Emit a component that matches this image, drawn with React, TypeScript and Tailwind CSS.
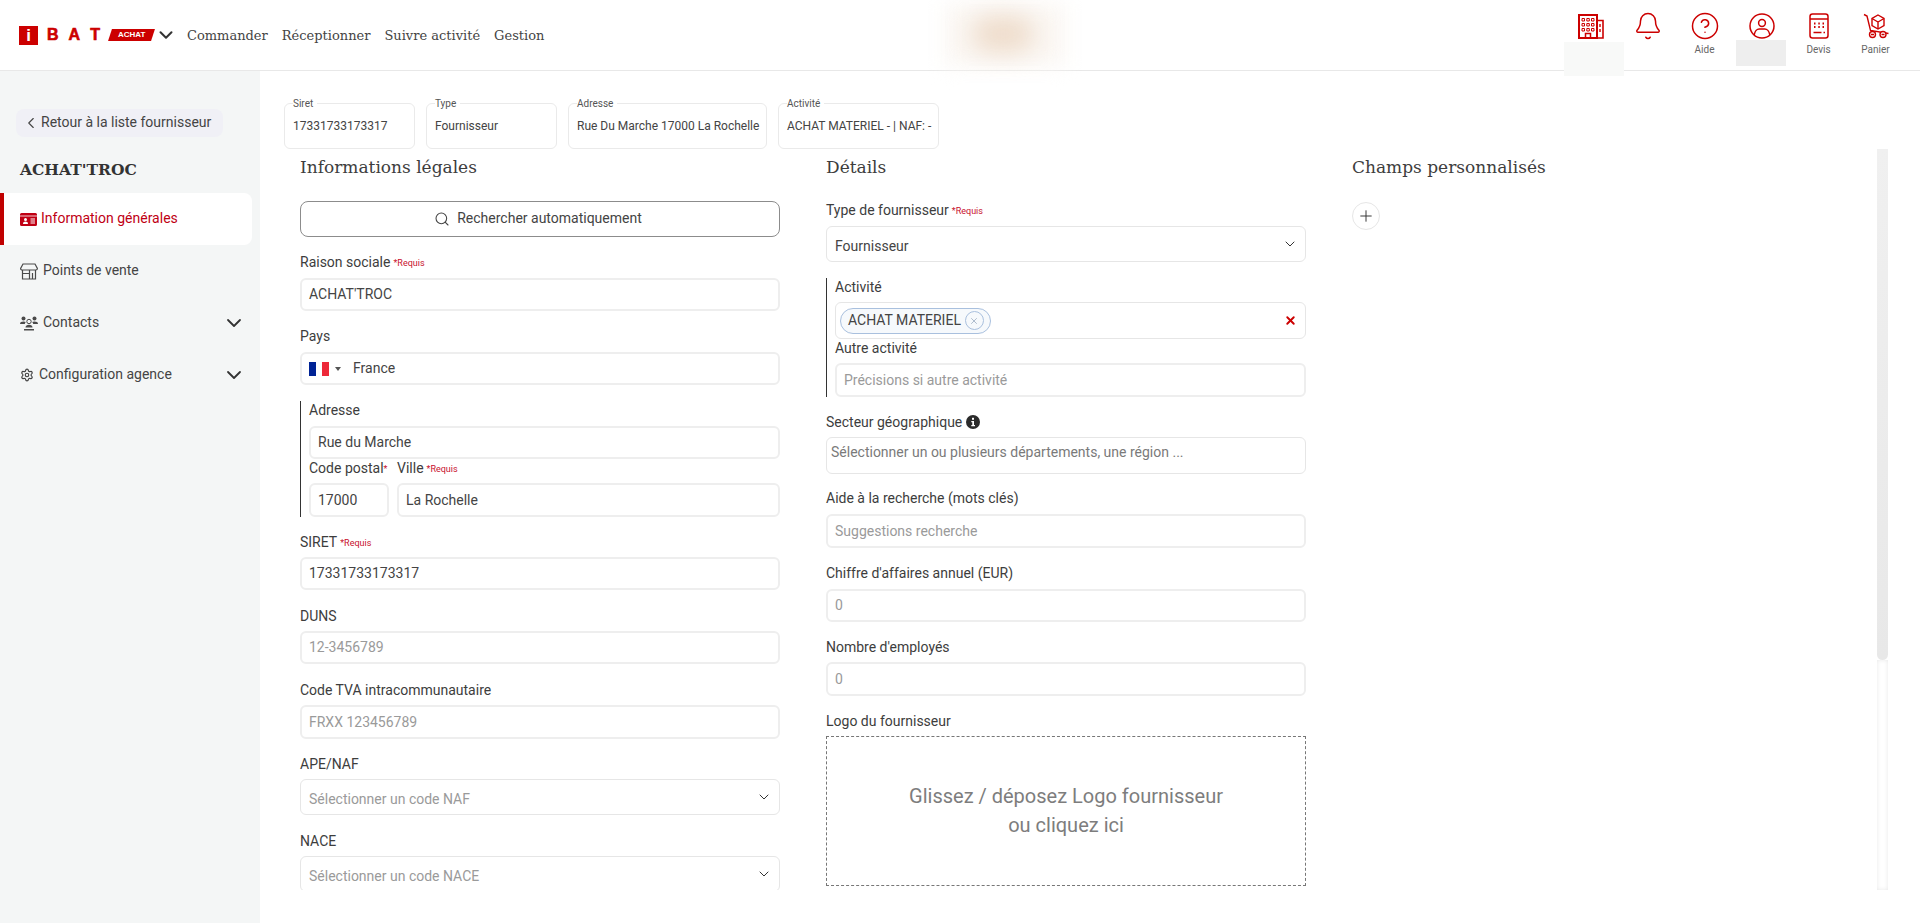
import React from 'react';
import { Bell, ChevronDown, ChevronLeft, CircleHelp, Plus, Search, Settings, X } from 'lucide-react';

const BuildingIcon = () => (
    <svg width="26" height="25" viewBox="0 0 26 25" fill="none" stroke="#cc0000">
        <rect x="1" y="1" width="18" height="23" strokeWidth="2" />
        <path d="M19 6.5h6v17.5h-6" strokeWidth="1.6" />
        <path d="M22 10v3M22 15v3" strokeWidth="1.4" />
        <path d="M4 4.5h2.5v2.5h-2.5zM8.8 4.5h2.5v2.5h-2.5zM13.5 4.5h2.5v2.5h-2.5zM4 9.5h2.5v2.5h-2.5zM8.8 9.5h2.5v2.5h-2.5zM13.5 9.5h2.5v2.5h-2.5zM4 14.5h2.5v2.5h-2.5zM8.8 14.5h2.5v2.5h-2.5zM13.5 14.5h2.5v2.5h-2.5z" strokeWidth="1" />
        <path d="M7.5 24v-4.5h5v4.5" strokeWidth="1.5" />
    </svg>
);

const UserCircleIcon = () => (
    <svg width="26" height="26" viewBox="0 0 26 26" fill="none" stroke="#cc0000" strokeWidth="1.5">
        <circle cx="13" cy="13" r="12" />
        <circle cx="13" cy="10" r="3.4" />
        <path d="M5.2 22c.6-3.8 3-6 5-6h5.6c2 0 4.400 2.200 5 6" />
    </svg>
);

const CalculatorIcon = () => (
    <svg width="20" height="26" viewBox="0 0 20 26" fill="none" stroke="#cc0000">
        <rect x="1" y="1" width="18" height="24" rx="2.500" strokeWidth="1.500" />
        <path d="M1 6h18" strokeWidth="1.500" />
        <path d="M5 10.500h1.500M9.300 10.500h1.500M13.500 10.500h1.500M5 14h1.500M9.300 14h1.500M13.500 14h1.500" strokeWidth="1.800" />
        <path d="M4.500 19.500h8M14.500 19.500h1.500" strokeWidth="1.500" />
    </svg>
);

const CartIcon = () => (
    <svg width="26" height="26" viewBox="0 0 26 26" fill="none" stroke="#cc0000" strokeWidth="1.400">
        <path d="M1 1.500l3 1.500 3.500 14.500 18 3" />
        <path d="M15 2l6 3.500v7l-6 3.500-6-3.500v-7z" />
        <path d="M9 5.500l6 3.500 6-3.500M15 9v7" />
        <circle cx="9.500" cy="21.500" r="3" fill="#ffffff" />
        <circle cx="20" cy="21.500" r="3" fill="#ffffff" />
        <path d="M8 21.500h3M18.500 21.500h3" />
    </svg>
);

const IdCardIcon = () => (
    <svg width="17" height="13" viewBox="0 0 17 13">
        <path d="M1.500 0h14a1.500 1.500 0 0 1 1.500 1.500v10a1.500 1.500 0 0 1-1.500 1.500h-14a1.500 1.500 0 0 1-1.500-1.500v-10a1.500 1.500 0 0 1 1.500-1.500z" fill="#c00014" />
        <path d="M0 3h17" stroke="#ffffff" strokeWidth="0.800" />
        <circle cx="5.500" cy="6.500" r="1.500" fill="#ffffff" />
        <path d="M3 11c0-2 1.200-2.600 2.500-2.600s2.500.6 2.500 2.600z" fill="#ffffff" />
        <path d="M10.500 6h4.500M10.500 8h4.500M10.500 10h4.500" stroke="#ffffff" strokeWidth="1" />
    </svg>
);

const StoreIcon = () => (
    <svg width="18" height="17" viewBox="0 0 18 17" fill="none" stroke="#4a4a4a" strokeWidth="1.200">
        <path d="M3 1h12l2.400 4.500c0 1-.8 1.500-1.700 1.500h-13.400c-.9 0-1.700-.5-1.700-1.500z" />
        <path d="M2.500 7v9h13v-9" />
        <path d="M2.500 10.500h7M9.500 7v9M12.500 10v6" />
    </svg>
);

const UsersIcon = () => (
    <svg width="18" height="15" viewBox="0 0 18 15" fill="#4a4a4a">
        <circle cx="3.500" cy="2.500" r="2" />
        <circle cx="14.500" cy="2.500" r="2" />
        <path d="M0 8c0-2 1.500-2.600 3.500-2.600 1 0 1.800.2 2.300.6-.6.6-1 1.300-1 2z" />
        <path d="M18 8c0-2-1.500-2.600-3.500-2.600-1 0-1.800.2-2.300.6.600.6 1 1.300 1 2z" />
        <circle cx="9" cy="5.500" r="2.200" fill="none" stroke="#4a4a4a" />
        <path d="M5.500 11.500c0-1.800 1.500-2.800 3.500-2.800s3.500 1 3.500 2.800zM4 13h10v1.500h-10z" />
    </svg>
);

const InfoIcon = () => (
    <svg width="14" height="14" viewBox="0 0 14 14">
        <circle cx="7" cy="7" r="7" fill="#2b2b2b" />
        <rect x="6" y="2.800" width="2" height="2" fill="#ffffff" />
        <path d="M5.300 6h2.700v4h1v1.200h-3.700v-1.200h1v-2.800h-1z" fill="#ffffff" />
    </svg>
);

const Requis = () => <span className="ml-[3px] mt-[3px] text-[9px] text-[#c8102e]">*Requis</span>;

const Label = ({ children, className = 'h-5 mb-[6px]' }: { children: React.ReactNode; className?: string }) => (
    <div className={`flex items-center text-[14px] leading-none text-[#3d3d3d] whitespace-nowrap ${className}`}>{children}</div>
);

const TextBox = ({ value, placeholder, className = 'h-[33px]' }: { value?: string; placeholder?: string; className?: string }) => (
    <div className={`flex items-center rounded-md border-2 border-[#eeeeee] px-[7px] text-[14px] whitespace-nowrap ${value ? 'text-[#444444]' : 'text-[#9a9a9a]'} ${className}`}>
        {value || placeholder}
    </div>
);

const SelectBox = ({ value, placeholder, className = 'h-9' }: { value?: string; placeholder?: string; className?: string }) => (
    <div className={`flex items-center justify-between rounded-md border border-[#e6e6e6] pl-2 pr-[7px] text-[14px] ${value ? 'text-[#444444]' : 'text-[#9a9a9a]'} ${className}`}>
        <span className="pt-[4px]">{value || placeholder}</span>
        <ChevronDown size={16} strokeWidth={1.500} className="text-[#333333]" />
    </div>
);

const InfoCard = ({ label, value, width }: { label: string; value: string; width: string }) => (
    <div className={`relative flex h-[46px] items-center rounded-md border border-[#eaeaea] pl-2 text-[12px] text-[#444444] whitespace-nowrap ${width}`}>
        <span className="absolute -top-[7px] left-2 bg-white pr-1 text-[10px] leading-[13px] text-[#555555]">{label}</span>
        {value}
    </div>
);

const SideItem = ({ icon, label, chevron }: { icon: React.ReactNode; label: string; chevron?: boolean }) => (
    <div className="flex h-[52px] w-[252px] items-center pl-5 pr-[6px] text-[14px] text-[#444444]">
        {icon}
        <span className="ml-[5px] pb-[2px]">{label}</span>
        {chevron && <ChevronDown size={24} strokeWidth={1.800} className="ml-auto text-[#333333]" />}
    </div>
);

const HeadIcon = ({ icon, label }: { icon: React.ReactNode; label?: string }) => (
    <div className="flex w-[57px] flex-col items-center pt-[13px]">
        <div className="flex h-[26px] items-center">{icon}</div>
        {label && <span className="mt-[5px] text-[10px] leading-[12px] text-[#666666]">{label}</span>}
    </div>
);

const slab = "font-['DejaVu_Serif',serif]";

export default function App() {
    return (
        <div className="flex h-[923px] w-[1920px] flex-col overflow-hidden bg-white font-['Roboto',sans-serif]">
            {/* Header */}
            <header className="relative z-10 flex h-[71px] shrink-0 border-b border-[#e8e8e8] bg-white">
                <div className="flex h-[70px] items-center pl-[19px]">
                    <div className="flex h-[19px] w-[19px] items-center justify-center bg-[#cc0000] font-['Liberation_Sans',sans-serif] text-[17px] font-bold leading-none text-white">i</div>
                    <div className="ml-[9px] flex w-[53px] justify-between font-['Liberation_Sans',sans-serif] text-[16px] font-bold leading-none text-[#cc0000] [-webkit-text-stroke:0.6px_#cc0000]">
                        <span>B</span>
                        <span>A</span>
                        <span>T</span>
                    </div>
                    <div className="ml-[10px] flex h-3 w-[43px] -skew-x-[18deg] items-center justify-center bg-[#cc0000]">
                        <span className="skew-x-[18deg] font-['Liberation_Sans',sans-serif] text-[8px] font-bold leading-none text-white">ACHAT</span>
                    </div>
                    <ChevronDown size={22} strokeWidth={2.200} className="ml-[2px] text-[#333333]" />
                    <nav className={`ml-[10px] flex gap-[14px] pt-[2px] text-[13px] text-[#444444] ${slab}`}>
                        <span>Commander</span>
                        <span>Réceptionner</span>
                        <span>Suivre activité</span>
                        <span>Gestion</span>
                    </nav>
                </div>

                {/* Blurred logo */}
                <div className="absolute left-[945px] top-[4px] h-[62px] w-[120px] bg-[#fbf7f3] blur-[10px]" />
                <div className="absolute left-[972px] top-[16px] h-[36px] w-[62px] rounded-full bg-[#eedccb] blur-[12px]" />

                <div className="ml-auto flex pr-4">
                    <HeadIcon icon={<BuildingIcon />} />
                    <HeadIcon icon={<Bell size={30} strokeWidth={1.200} className="text-[#cc0000]" />} />
                    <HeadIcon icon={<CircleHelp size={30} strokeWidth={1.200} className="text-[#cc0000]" />} label="Aide" />
                    <HeadIcon icon={<UserCircleIcon />} />
                    <HeadIcon icon={<CalculatorIcon />} label="Devis" />
                    <HeadIcon icon={<CartIcon />} label="Panier" />
                </div>

                {/* Masked user info */}
                <div className="absolute left-[1564px] top-[42px] h-[34px] w-[60px] bg-[#f8f9f8]" />
                <div className="absolute left-[1736px] top-[40px] h-[26px] w-[50px] bg-[#eeeeee]" />
            </header>

            <div className="flex min-h-0 flex-1">
                {/* Sidebar */}
                <aside className="w-[260px] shrink-0 bg-[#f4f6f6] pt-[38px]">
                    <div className="ml-4 flex h-[28px] w-[207px] items-center rounded-lg bg-[#f0f0f6] pl-[6px] text-[14px] text-[#444444]">
                        <ChevronLeft size={18} strokeWidth={1.500} />
                        <span className="ml-px whitespace-nowrap pb-[2px]">Retour à la liste fournisseur</span>
                    </div>
                    <div className={`ml-[20px] mt-5 mb-[10px] h-[26px] text-[15.500px] font-bold leading-[26px] text-[#333333] ${slab}`}>ACHAT'TROC</div>
                    <div className="flex h-[52px] w-[252px] items-center rounded-r-lg border-l-4 border-[#c00000] bg-white pl-4 text-[14px] text-[#c00014]">
                        <IdCardIcon />
                        <span className="ml-[4px] pb-[2px]">Information générales</span>
                    </div>
                    <SideItem icon={<StoreIcon />} label="Points de vente" />
                    <SideItem icon={<UsersIcon />} label="Contacts" chevron />
                    <SideItem icon={<Settings size={14} className="text-[#444444]" />} label="Configuration agence" chevron />
                </aside>

                {/* Main */}
                <main className="flex min-w-0 flex-1 flex-col pl-6 pr-8 pt-8">
                    <div className="flex h-[46px] shrink-0 gap-[11px]">
                        <InfoCard label="Siret" value="17331733173317" width="w-[131px]" />
                        <InfoCard label="Type" value="Fournisseur" width="w-[131px]" />
                        <InfoCard label="Adresse" value="Rue Du Marche 17000 La Rochelle" width="w-[199px]" />
                        <InfoCard label="Activité" value="ACHAT MATERIEL - | NAF: -" width="w-[161px]" />
                    </div>

                    <div className="flex h-[741px] shrink-0 overflow-hidden">
                        <div className="grid flex-1 grid-cols-[480px_480px_1fr] gap-x-[46px] overflow-hidden pl-4">
                            {/* Informations légales */}
                            <section>
                                <h3 className={`mb-[14px] flex h-[38px] items-center text-[17px] text-[#3d3d3d] ${slab}`}>Informations légales</h3>
                                <div className="mb-[15px] flex h-9 items-center justify-center rounded-lg border border-[#8c8c8c] pr-[4px] text-[14px] text-[#444444]">
                                    <Search size={16} strokeWidth={1.600} className="mr-[7px]" />
                                    <span className="pb-[2px]">Rechercher automatiquement</span>
                                </div>
                                <Label>Raison sociale<Requis /></Label>
                                <TextBox value="ACHAT'TROC" className="mb-[15px] h-[33px]" />
                                <Label>Pays</Label>
                                <div className="mb-4 flex h-[33px] items-center rounded-md border-2 border-[#eeeeee] pl-[7px] text-[14px] text-[#444444]">
                                    <div className="flex h-[14px] w-5">
                                        <div className="flex-1 bg-[#002395]" />
                                        <div className="flex-1 bg-white" />
                                        <div className="flex-1 bg-[#ed2939]" />
                                    </div>
                                    <div className="ml-[6px] h-0 w-0 border-x-[3px] border-t-[4px] border-x-transparent border-t-[#555555]" />
                                    <span className="ml-[12px]">France</span>
                                </div>
                                <div className="mb-[15px] border-l border-[#333333] pl-2">
                                    <Label className="mb-[7px] h-[18px]">Adresse</Label>
                                    <TextBox value="Rue du Marche" />
                                    <div className="grid grid-cols-[80px_1fr] gap-x-2">
                                        <div>
                                            <Label className="mb-[6px] h-[18px]">Code postal<span className="mt-[3px] text-[9px] text-[#c8102e]">*</span></Label>
                                            <TextBox value="17000" className="h-[34px]" />
                                        </div>
                                        <div>
                                            <Label className="mb-[6px] h-[18px]">Ville<Requis /></Label>
                                            <TextBox value="La Rochelle" className="h-[34px]" />
                                        </div>
                                    </div>
                                </div>
                                <Label className="mb-[5px] h-5">SIRET<Requis /></Label>
                                <TextBox value="17331733173317" className="mb-4 h-[33px]" />
                                <Label className="mb-[5px] h-5">DUNS</Label>
                                <TextBox placeholder="12-3456789" className="mb-4 h-[33px]" />
                                <Label className="mb-[5px] h-5">Code TVA intracommunautaire</Label>
                                <TextBox placeholder="FRXX 123456789" className="mb-[15px] h-[34px]" />
                                <Label className="mb-[5px] h-5">APE/NAF</Label>
                                <SelectBox placeholder="Sélectionner un code NAF" className="mb-4 h-9" />
                                <Label className="mb-[5px] h-5">NACE</Label>
                                <SelectBox placeholder="Sélectionner un code NACE" />
                            </section>

                            {/* Détails */}
                            <section>
                                <h3 className={`mb-[13px] flex h-[38px] items-center text-[17px] text-[#3d3d3d] ${slab}`}>Détails</h3>
                                <Label>Type de fournisseur<Requis /></Label>
                                <SelectBox value="Fournisseur" className="mb-4 h-9" />
                                <div className="mb-[15px] border-l border-[#333333] pl-2">
                                    <Label className="mb-[6px] h-[18px]">Activité</Label>
                                    <div className="flex h-[37px] items-center justify-between rounded-md border border-[#e6e6e6] pl-[4px] pr-2">
                                        <div className="flex h-[26px] w-[151px] items-center rounded-full border border-[#a9c0de] bg-[#f6f9fc] pl-[7px] text-[14px] text-[#444444]">
                                            ACHAT MATERIEL
                                            <div className="ml-[4px] flex h-[19px] w-[19px] items-center justify-center rounded-full border border-[#a9c0de]">
                                                <X size={10} strokeWidth={1.500} className="text-[#8296b0]" />
                                            </div>
                                        </div>
                                        <X size={13} strokeWidth={3.500} className="text-[#cc0000]" />
                                    </div>
                                    <Label className="mb-[6px] h-[18px]">Autre activité</Label>
                                    <TextBox placeholder="Précisions si autre activité" className="h-[34px]" />
                                </div>
                                <Label className="mb-[5px] h-5">Secteur géographique<span className="ml-[4px]"><InfoIcon /></span></Label>
                                <div className="mb-[14px] h-[37px] rounded-md border border-[#e6e6e6] pl-[4px] pt-[6px] text-[14px] leading-[17px] text-[#7a7a7a]">Sélectionner un ou plusieurs départements, une région ...</div>
                                <Label>Aide à la recherche (mots clés)</Label>
                                <TextBox placeholder="Suggestions recherche" className="mb-[15px] h-[34px]" />
                                <Label>Chiffre d'affaires annuel (EUR)</Label>
                                <TextBox placeholder="0" className="mb-[15px] h-[33px]" />
                                <Label className="mb-[5px] h-5">Nombre d'employés</Label>
                                <TextBox placeholder="0" className="mb-[15px] h-[34px]" />
                                <Label className="mb-[5px] h-5">Logo du fournisseur</Label>
                                <div className="flex h-[150px] flex-col items-center justify-center border border-dashed border-[#777777] text-[20px] leading-[29px] text-[#7d7d7d]">
                                    <span>Glissez / déposez Logo fournisseur</span>
                                    <span>ou cliquez ici</span>
                                </div>
                            </section>

                            {/* Champs personnalisés */}
                            <section>
                                <h3 className={`mb-[15px] flex h-[38px] items-center text-[17px] text-[#3d3d3d] ${slab}`}>Champs personnalisés</h3>
                                <div className="flex h-[28px] w-[28px] items-center justify-center rounded-full border border-[#e6e6e6] text-[#333333]">
                                    <Plus size={18} strokeWidth={1.300} />
                                </div>
                            </section>
                        </div>

                        {/* Scrollbar */}
                        <div className="flex w-[11px] shrink-0 flex-col">
                            <div className="h-[511px] rounded-b-md bg-gradient-to-b from-[#f0f0f0] to-[#e8e8e8]" />
                            <div className="flex-1 shadow-[inset_0_0_4px_#e8e8e8]" />
                        </div>
                    </div>
                </main>
            </div>
        </div>
    );
}
